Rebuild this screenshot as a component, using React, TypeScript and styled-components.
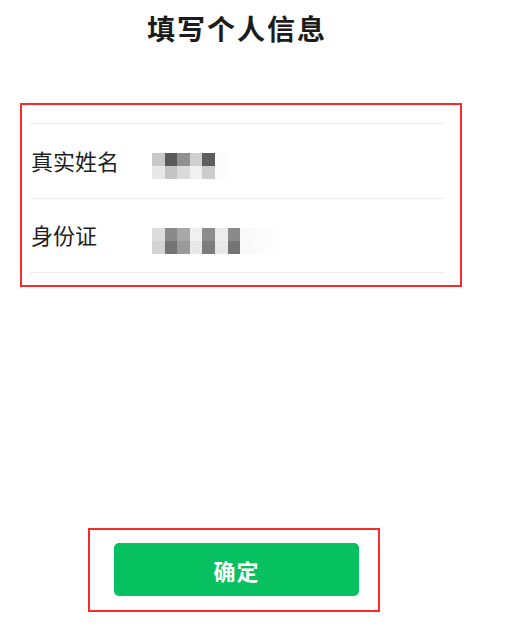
import styled, { createGlobalStyle } from 'styled-components';

const GlobalStyle = createGlobalStyle`
  * {
    box-sizing: border-box;
  }

  body {
    margin: 0;
    background: #fff;
    font-family: "Noto Sans CJK SC", "Noto Sans", sans-serif;
    color: #1a1a1a;
  }
`;

// blurred (mosaic) values, row by row
const nameMosaic = [
  ['#c8c8c8', '#5a5a5a', '#909090', '#d0d0d0', '#5e5e5e', '#fbfbfb'],
  ['#e8e8e8', '#c4c4c4', '#dadada', '#f0f0f0', '#cccccc', '#fbfbfb'],
];

const idMosaic = [
  ['#dcdcdc', '#8a8a8a', '#a8a8a8', '#f0f0f0', '#8c8c8c', '#ececec', '#8a8a8a', '#fafafa', '#fbfbfb', '#fdfdfd'],
  ['#d4d4d4', '#747474', '#9a9a9a', '#e8e8e8', '#7c7c7c', '#e8e8e8', '#747474', '#f9f9f9', '#fbfbfb', '#fdfdfd'],
];

const fields = [
  { label: '真实姓名', mosaic: nameMosaic },
  { label: '身份证', mosaic: idMosaic },
];

const App = () => {
  return (
    <>
      <GlobalStyle />
      <Page>
        <Title>填写个人信息</Title>

        <FormBox>
          {fields.map((field) => (
            <Row key={field.label}>
              <Label>{field.label}</Label>
              <Mosaic $cols={field.mosaic[0].length}>
                {field.mosaic.flat().map((shade, i) => (
                  <Cell key={i} $shade={shade} />
                ))}
              </Mosaic>
            </Row>
          ))}
        </FormBox>

        <ButtonBox>
          <ConfirmButton>确定</ConfirmButton>
        </ButtonBox>
      </Page>
    </>
  );
};

const Page = styled.div`
  width: 474px;
  display: flex;
  flex-direction: column;
`;

const Title = styled.h1`
  margin: 0;
  padding-top: 8px;
  height: 48px;
  line-height: 40px;
  text-align: center;
  font-size: 28px;
  font-weight: 700;
  color: #1c1c1c;
  letter-spacing: 2px;
`;

const FormBox = styled.div`
  margin: 55px 0 0 20px;
  width: 442px;
  height: 184px;
  border: 2px solid #f82a2a;
  padding: 18px 16px 0 8px;
`;

const Row = styled.div`
  display: flex;
  align-items: center;
  height: 75px;
  border-top: 1px solid #ececec;

  &:last-child {
    border-bottom: 1px solid #ececec;
  }
`;

const Label = styled.span`
  width: 122px;
  padding-left: 1px;
  font-size: 22px;
  line-height: 30px;
  color: #1e1e1e;
  margin-top: -3px;
`;

const Mosaic = styled.div<{ $cols: number }>`
  display: grid;
  grid-template-columns: repeat(${(p) => p.$cols}, 12.6px);
  grid-auto-rows: 13px;
  margin-top: 10px;
`;

const Cell = styled.div<{ $shade: string }>`
  background: ${(p) => p.$shade};
`;

const ButtonBox = styled.div`
  margin: 241px 0 0 88px;
  width: 292px;
  border: 2px solid #f82a2a;
  padding: 13px 19px 14px 24px;
`;

const ConfirmButton = styled.button`
  display: block;
  width: 245px;
  height: 53px;
  border: none;
  border-radius: 5px;
  background: #07c160;
  color: #fff;
  font-family: "Noto Sans CJK SC", "Noto Sans", sans-serif;
  font-size: 22px;
  font-weight: 700;
  letter-spacing: 1px;
`;

export default App;
